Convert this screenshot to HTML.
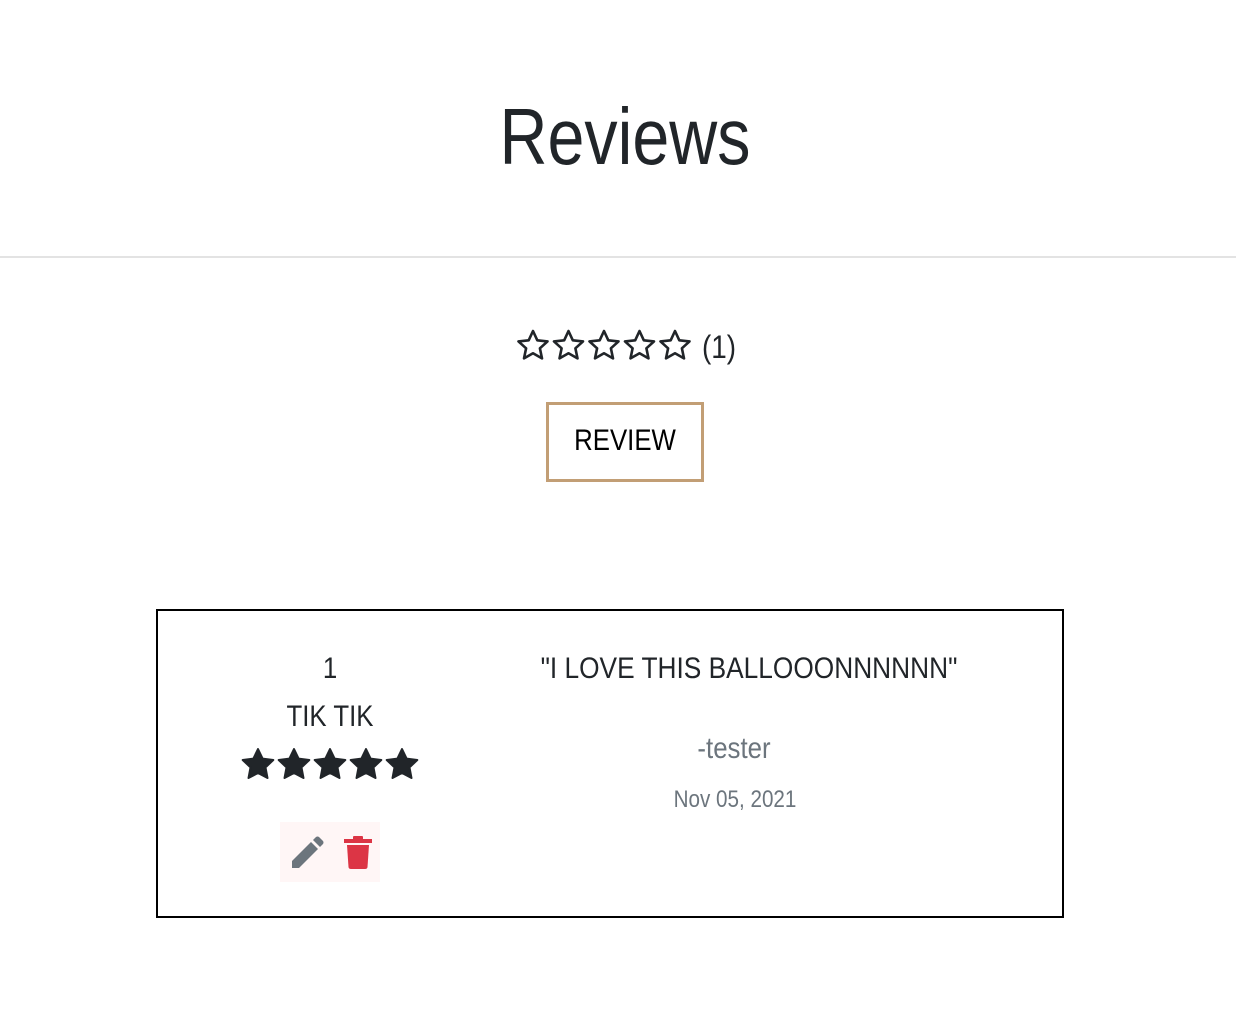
<!DOCTYPE html>
<html><head><style>
body{margin:0;width:1236px;height:1023px;background:#fff;font-family:"Liberation Sans Narrow","Liberation Sans",sans-serif;color:#212529;position:relative;overflow:hidden}
.a{position:absolute;white-space:nowrap}
.c{transform:translateX(-50%) scaleX(0.86)}
</style></head><body>
<div class="a c" style="left:625px;top:92px;font-size:80px;line-height:90px;transform:translateX(-50%) scaleX(0.83)">Reviews</div>
<div class="a" style="left:0;top:256px;width:1236px;height:2px;background:#e3e3e3"></div>
<svg class="a" style="left:515px;top:328px" width="180" height="36" viewBox="0 0 180 36">
<defs><path id="s" d="M18 3 L22.3 12.3 L32.5 13.4 L24.9 20.3 L27 30.4 L18 25.3 L9 30.4 L11.1 20.3 L3.5 13.4 L13.7 12.3 Z"/></defs>
<g fill="none" stroke="#212529" stroke-width="2.6" stroke-linejoin="round">
<use href="#s" x="0"/><use href="#s" x="35.5"/><use href="#s" x="71"/><use href="#s" x="106.5"/><use href="#s" x="142"/></g></svg>
<div class="a" style="left:702px;top:329px;font-size:32px;line-height:36px;transform:scaleX(0.87);transform-origin:left">(1)</div>
<div class="a" style="left:546px;top:402px;width:152px;height:74px;border:3px solid #c29e75"></div>
<div class="a c" style="left:625px;top:423px;font-size:30px;line-height:36px;color:#000">REVIEW</div>
<div class="a" style="left:156px;top:609px;width:904px;height:305px;border:2px solid #000"></div>
<div class="a c" style="left:330px;top:651px;font-size:30px;line-height:36px">1</div>
<div class="a c" style="left:330px;top:699px;font-size:30px;line-height:36px">TIK TIK</div>
<svg class="a" style="left:240px;top:746px" width="182" height="38" viewBox="0 0 182 36">
<defs><path id="f" d="M18 2 L22.6 11.6 L33.3 13 L25.5 20.4 L27.5 31 L18 26 L8.5 31 L10.5 20.4 L2.7 13 L13.4 11.6 Z"/></defs>
<g fill="#212529" stroke="#212529" stroke-width="2" stroke-linejoin="round">
<use href="#f" x="0"/><use href="#f" x="36"/><use href="#f" x="72"/><use href="#f" x="108"/><use href="#f" x="144"/></g></svg>
<div class="a" style="left:280px;top:822px;width:100px;height:60px;background:#fff6f6"></div>
<svg class="a" style="left:288px;top:834px" width="36" height="36" viewBox="0 0 36 36">
<path d="M4 34 L4 27 L23 8 L30 15 L11 34 Z" fill="#6c757d"/><path d="M25 6 L28 3 Q29.5 2 31 3 L35 7 Q36 8.5 35 10 L32 13 Z" fill="#6c757d"/></svg>
<svg class="a" style="left:342px;top:834px" width="32" height="36" viewBox="0 0 32 36">
<rect x="2" y="5" width="28" height="4" fill="#dc3545"/><rect x="11" y="2" width="10" height="4" rx="1" fill="#dc3545"/>
<path d="M5 11 L27 11 L25.5 33 Q25.3 35 23 35 L9 35 Q6.7 35 6.5 33 Z" fill="#dc3545"/></svg>
<div class="a c" style="left:749px;top:651px;font-size:30px;line-height:36px;transform:translateX(-50%) scaleX(0.876)">"I LOVE THIS BALLOOONNNNNN"</div>
<div class="a c" style="left:734px;top:731px;font-size:30px;line-height:36px;color:#6c757d">-tester</div>
<div class="a c" style="left:735px;top:785px;font-size:24px;line-height:30px;color:#6c757d">Nov 05, 2021</div>
</body></html>
